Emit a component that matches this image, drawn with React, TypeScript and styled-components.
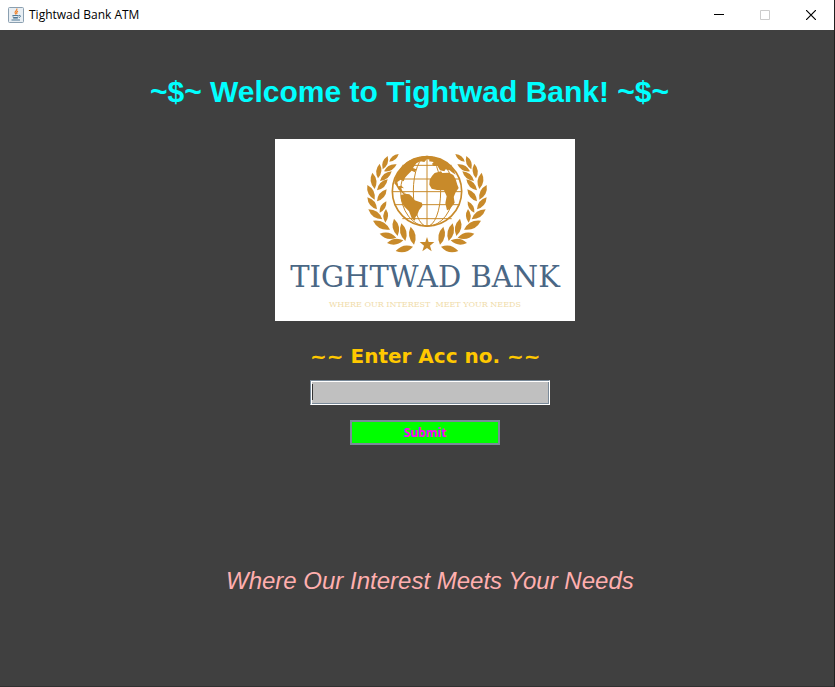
import React from "react";
import styled, { createGlobalStyle } from "styled-components";

const GlobalStyle = createGlobalStyle`
  *, *::before, *::after { box-sizing: border-box; }
  body { margin: 0; background: #404040; }
`;

const Window = styled.div`
  min-height: 100vh;
  display: flex;
  flex-direction: column;
  background: #404040;
  border-right: 1px solid #202020;
  border-bottom: 1px solid #303030;
`;

const TitleBar = styled.header`
  height: 30px;
  flex: none;
  display: flex;
  align-items: center;
  padding-left: 8px;
  gap: 5px;
  background: #fff;
`;

const WindowTitle = styled.span`
  flex: 1;
  font: 12px/16px "Open Sans", "Noto Sans", sans-serif;
  color: #000;
`;

const WindowButtons = styled.div`
  display: flex;
`;

const WindowButton = styled.button`
  width: 46px;
  height: 30px;
  display: grid;
  place-items: center;
  padding: 0;
  border: 0;
  background: transparent;
  color: #000;

  &:disabled {
    color: #ccc;
  }
`;

const Content = styled.main`
  flex: 1;
  width: 100%;
  max-width: 566px;
  margin: 0 auto;
  padding: 45px 0 0 16px;
`;

const Heading = styled.h1`
  margin: 0;
  font: bold 30px/34px "Liberation Sans", Arial, sans-serif;
  color: #00ffff;
  white-space: nowrap;
`;

const LogoCard = styled.figure`
  width: 300px;
  height: 182px;
  margin: 30px auto 0;
  padding-top: 1px;
  display: flex;
  flex-direction: column;
  align-items: center;
  background: #fff;
`;

const LogoName = styled.span`
  font: 29px/34px "DejaVu Serif", serif;
  color: #4a6785;
  white-space: nowrap;
`;

const LogoMotto = styled.span`
  margin-top: 4px;
  font: 8px/14px "DejaVu Serif", serif;
  color: #f0dcaa;
  white-space: pre;
`;

const LoginForm = styled.form`
  width: 240px;
  margin: 23px 0 0 160px;
  display: flex;
  flex-direction: column;
`;

const FieldLabel = styled.label`
  font: bold 20px/24px "DejaVu Sans", Verdana, sans-serif;
  color: #ffc800;
  white-space: nowrap;
`;

const AccountInput = styled.input`
  height: 25px;
  margin-top: 12px;
  padding: 0 1px;
  border: 1px solid;
  border-color: #7a8a99 #fff #fff #7a8a99;
  border-radius: 0;
  outline: none;
  background: #c0c0c0;
  box-shadow: inset 1px 1px #fff, inset -1px -1px #7a8a99;
  font: 12px/16px "DejaVu Sans", sans-serif;
  color: #333;

  &:placeholder-shown {
    caret-color: transparent;
    background: linear-gradient(#333, #333) 1px 3px / 1px 16px no-repeat #c0c0c0;
  }
`;

const SubmitButton = styled.button`
  width: 150px;
  height: 25px;
  margin: 15px 0 0 40px;
  padding: 0;
  border: 2px solid #7a8a99;
  background: #00ff00;
  font: bold 12px/16px "Open Sans", "Noto Sans", sans-serif;
  color: #ff00ff;
`;

const Slogan = styled.p`
  margin: 122px 0 0 76px;
  font: italic 24px/28px "Liberation Sans", Arial, sans-serif;
  color: #ffafaf;
  white-space: nowrap;
`;

const JavaIcon = () => (
  <svg width="16" height="16" viewBox="0 0 16 16" fill="none" aria-hidden="true">
    <rect x=".5" y=".5" width="15" height="15" rx="1" fill="#e8eef3" stroke="#8ba0b1" />
    <path d="M8.8 1.5C9.8 3.5 6 4.2 7.2 6.2L8 7.5M10 4C8 5 8.5 6 9 7" stroke="#ee7d22" strokeWidth="1.1" />
    <path d="M4.5 8.5h6M5 10.5h5M3.5 13h8.5M11 8.5c2-.6 2 1.6 0 2" stroke="#4e7896" />
    <path d="M4.8 8.5l.7 3h4l.8-3" stroke="#7596ad" strokeWidth=".8" />
  </svg>
);

type Leaf = [x1: number, y1: number, x2: number, y2: number];

const LEAVES: Leaf[] = [
  [131, 42, 103, 65],
  [98, 48, 83, 88],
  [125, 73, 87, 94],
  [74, 71, 69, 115],
  [110, 94, 75, 123],
  [52, 98, 59, 147],
  [98, 118, 66, 151],
  [37, 135, 59, 179],
  [95, 148, 66, 184],
  [37, 172, 66, 208],
  [94, 184, 74, 218],
  [40, 208, 82, 238],
  [93, 207, 91, 248],
  [54, 242, 105, 269],
  [117, 236, 128, 288],
  [74, 281, 124, 293],
  [139, 250, 151, 303],
  [96, 309, 145, 301],
  [167, 260, 177, 314],
  [122, 333, 174, 320],
];

const leafPath = ([x1, y1, x2, y2]: Leaf) => {
  const dx = (x2 - x1) * 0.35;
  const dy = (y2 - y1) * 0.35;
  const mx = (x1 + x2) / 2;
  const my = (y1 + y2) / 2;
  return `M${x1} ${y1}Q${mx - dy} ${my + dx} ${x2} ${y2}Q${mx + dy} ${my - dx} ${x1} ${y1}Z`;
};

const Branch = () => (
  <>
    {LEAVES.map((leaf) => (
      <path key={leaf.join()} d={leafPath(leaf)} />
    ))}
  </>
);

const Emblem = () => (
  <svg width="144" height="120" viewBox="-6 0 432 360" fill="#c88a2a" role="img" aria-label="Globe in a laurel wreath">
    <Branch />
    <g transform="translate(432 0) scale(-1 1)">
      <Branch />
    </g>
    <g fill="none" stroke="#c88a2a" strokeWidth="3">
      <circle cx="216" cy="154" r="104" strokeWidth="5" />
      <path d="M216 49V259M111 155H321M142 76H290M119 117H313M119 194H313M142 236H290" />
      <ellipse cx="216" cy="154" rx="41" ry="105" />
      <ellipse cx="216" cy="154" rx="79" ry="105" />
    </g>
    <path d="M118 130L124 106L140 80L162 62L190 52L216 49L240 52L226 60L216 57L208 66L196 64L184 70L174 84L184 88L180 97L170 92L158 104L150 113L146 124L137 119L127 126L130 139L139 137L147 145L137 143L144 156L153 160L145 162L131 149L123 136Z" />
    <path d="M137 166L150 161L163 163L171 170L179 181L201 188L202 198L192 211L187 224L181 232L180 242L171 237L162 214L147 199L138 181Z" />
    <path d="M226 53L248 54L273 67L296 90L302 104L290 96L284 91L272 88L268 94L255 91L247 77L236 78L231 72L236 66L222 64Z" />
    <path d="M231 108L239 99L258 94L262 99L282 98L295 105L302 118L307 134L311 144L302 157L296 171L299 188L285 207L276 211L271 190L275 169L267 151L246 150L230 146L223 134L224 119Z" />
    <path d="M216 291l5 15h17l-13 11 5 17-14-10-14 10 5-17-13-11h17z" />
  </svg>
);

export default function App() {
  return (
    <>
      <GlobalStyle />
      <Window>
        <TitleBar>
          <JavaIcon />
          <WindowTitle>Tightwad Bank ATM</WindowTitle>
          <WindowButtons>
            <WindowButton type="button" aria-label="Minimize">
              <svg width="10" height="10" stroke="currentColor">
                <path d="M0 4.5h10" />
              </svg>
            </WindowButton>
            <WindowButton type="button" aria-label="Maximize" disabled>
              <svg width="10" height="10" stroke="currentColor" fill="none">
                <path d="M.5 .5h9v9h-9z" />
              </svg>
            </WindowButton>
            <WindowButton type="button" aria-label="Close">
              <svg width="10" height="10" stroke="currentColor" strokeWidth="1.2">
                <path d="M0 0L10 10M10 0L0 10" />
              </svg>
            </WindowButton>
          </WindowButtons>
        </TitleBar>
        <Content>
          <Heading>~$~ Welcome to Tightwad Bank! ~$~</Heading>
          <LogoCard>
            <Emblem />
            <LogoName>TIGHTWAD BANK</LogoName>
            <LogoMotto>{"WHERE OUR INTEREST  MEET YOUR NEEDS"}</LogoMotto>
          </LogoCard>
          <LoginForm onSubmit={(event) => event.preventDefault()}>
            <FieldLabel htmlFor="account">~~ Enter Acc no. ~~</FieldLabel>
            <AccountInput id="account" type="text" placeholder=" " autoFocus />
            <SubmitButton type="submit">Submit</SubmitButton>
          </LoginForm>
          <Slogan>Where Our Interest Meets Your Needs</Slogan>
        </Content>
      </Window>
    </>
  );
}
